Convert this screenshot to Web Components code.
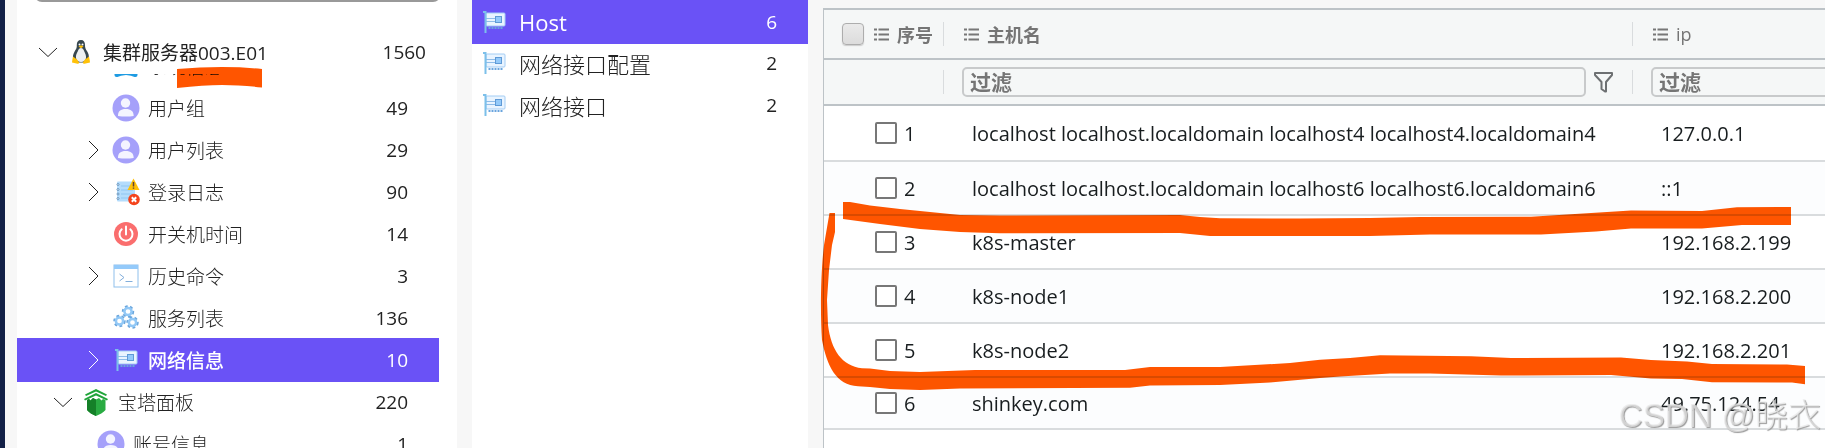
<!DOCTYPE html>
<html lang="zh-CN">
<head>
<meta charset="UTF-8">
<title>Host</title>
<style>
    html, body { margin: 0; height: 100%; }
    body { background: #f7f7f7; color: #222; font-family: "Open Sans", "Noto Sans CJK SC", sans-serif; font-size: 19px; overflow: hidden; }
</style>
</head>
<body>
<app-shell>
    <tree-panel slot="tree">
        <tree-row slot="root" level="0" icon="linux" arrow="down" count="1560" root>集群服务器003.E01</tree-row>
        <tree-row level="3" icon="windows" count="">系统信息</tree-row>
        <tree-row level="3" icon="user" count="49">用户组</tree-row>
        <tree-row level="3" icon="user" arrow="right" count="29">用户列表</tree-row>
        <tree-row level="3" icon="log" arrow="right" count="90">登录日志</tree-row>
        <tree-row level="3" icon="power" count="14">开关机时间</tree-row>
        <tree-row level="3" icon="terminal" arrow="right" count="3">历史命令</tree-row>
        <tree-row level="3" icon="gears" count="136">服务列表</tree-row>
        <tree-row level="3" icon="nic" arrow="right" count="10" selected>网络信息</tree-row>
        <tree-row level="1" icon="pagoda" arrow="down" count="220">宝塔面板</tree-row>
        <tree-row level="2" icon="user" count="1">账号信息</tree-row>
    </tree-panel>
    <category-list slot="list">
        <category-item count="6" selected>Host</category-item>
        <category-item count="2">网络接口配置</category-item>
        <category-item count="2">网络接口</category-item>
    </category-list>
    <host-table slot="content"></host-table>
    <ink-marks slot="overlay"></ink-marks>
    <water-mark slot="overlay">CSDN @晓衣</water-mark>
</app-shell>

<script>
const ICONS = {
    linux: `
        <path d="M14 2c-3 0-4.300 2-4.200 5 .1 3-.6 4-2.200 6.500-1.500 2.500-2 5-1.400 7.500l3 3.500h9.500l3-3.500c.6-3-.2-5.500-1.600-7.700C18.500 11 18 9.500 18 7c0-3-1.200-5-4-5z" fill="#37474f"/>
        <path d="M14 10c-1.500 0-2.300 1.200-3.200 3.200-1.200 2.300-2.200 4.300-1.800 6.800.4 2.600 2.500 4 5 4s4.700-1.400 5-4c.3-2.600-.7-4.500-1.800-6.800-.9-2-1.700-3.200-3.200-3.200z" fill="#eceff1"/>
        <circle cx="12.500" cy="6.500" r="1" fill="#fff"/><circle cx="15.500" cy="6.500" r="1" fill="#fff"/>
        <path d="M11.500 8.500l2.500-1.300 2.500 1.300-2.500 1.700z" fill="#ffc107"/>
        <path d="M6 18.500l4 3 2 2.800c.3 1-.5 1.600-1.500 1.500L5 24.500l.3-2.500zM22 18.500l-4 3-2 2.800c-.3 1 .5 1.600 1.500 1.500l5.500-1.300-.3-2.500z" fill="#ffc107"/>`,
    windows: `<rect x="2.500" y="3" width="23" height="22" rx="2" fill="#1e9be2"/><path d="M4 25.500q10-5 20 0z" fill="#fff"/>`,
    user: `
        <circle cx="14" cy="14" r="13.500" fill="#a5a0fa"/>
        <circle cx="13.500" cy="9" r="4.700" fill="#f4f4ff"/>
        <path d="M6 22c0-5 2.600-7 7.700-7s8 2 8 7q-7.800 1-15.700 0z" fill="#f4f4ff"/>`,
    log: `
        <rect x="5" y="3.500" width="18" height="20" rx="1" fill="#b4dcfc"/>
        <path d="M9 8h12M9 12h12M9 16h12M9 20h12" stroke="#90c6f2"/>
        <g fill="#fff" stroke="#6292bd"><circle cx="6" cy="6.500" r="1"/><circle cx="6" cy="11.500" r="1"/><circle cx="6" cy="16" r="1"/><circle cx="6" cy="20.500" r="1"/></g>
        <path d="M21.500.5l6 11.500h-12z" fill="#ffc107"/><path d="M21.500 4v4.500M21.500 9.500v1.300" stroke="#5d4037" stroke-width="1.500"/>
        <circle cx="22" cy="21.500" r="5.800" fill="#f4431c"/><path d="M19.800 19.300l4.400 4.400M24.200 19.300l-4.400 4.400" stroke="#fff" stroke-width="2"/>`,
    power: `
        <circle cx="14" cy="14" r="12" fill="#fa6e6e"/>
        <path d="M9.700 9.300a6.500 6.500 0 1 0 8.600 0M14 6.500v8" fill="none" stroke="#fff" stroke-width="2" stroke-linecap="round"/>`,
    terminal: `
        <rect x="2" y="3" width="24" height="22" fill="#fff" stroke="#8fc0ec"/>
        <path d="M2 3h24v4H2z" fill="#94cafa"/>
        <path d="M7.500 12l4.500 3.500-4.500 3.500M13.500 19.500h7" fill="none" stroke="#82aedb"/>`,
    gears: `
        <g fill="none" stroke="#6ba6dc">
            <g stroke-width="3" stroke-dasharray="2.500 2.200"><circle cx="16" cy="7.500" r="4.700"/><circle cx="7.500" cy="17" r="4.700"/><circle cx="20.500" cy="18.500" r="4.700"/></g>
            <g stroke="#92c8f6" stroke-width="2.500"><circle cx="16" cy="7.500" r="3.600"/><circle cx="7.500" cy="17" r="3.600"/><circle cx="20.500" cy="18.500" r="3.600"/></g>
        </g>`,
    nic: `
        <rect x="6" y="5" width="19" height="13" rx="1" fill="#e9f4ff" stroke="#a4cdf4"/>
        <path d="M6 10.500h9M6 13.500h9" stroke="#8ebce9"/>
        <rect x="15.500" y="8.500" width="6" height="6" fill="#94cafa" stroke="#5f9ad6"/>
        <path d="M8.500 20h15" stroke="#6aa5de" stroke-width="2" stroke-dasharray="2 1"/>
        <path d="M3 4h2.500v21" fill="none" stroke="#7cc0ea" stroke-width="2"/>`,
    pagoda: `
        <path d="M14 1l11 5.500-1 1.500-10-4.500L4 8 3 6.500zM14 5l12 6-1 1.500-11-5-11 5-1-1.500z" fill="#20a53a"/>
        <path d="M5 12l2-1 1.500 1.500L11 10l3 1.500 3-1.500 2.500 2.500L21 11l2.500 1v10c-2 2.500-6 4.500-9.500 6-3.500-1.500-7-3.500-9-6z" fill="#29ab42"/>
        <path d="M5 12l2-1 1.500 1.500L11 10l3 1.500V28c-3.500-1.500-7-3.500-9-6z" fill="#158028"/>`,
    down: `<path d="M1 6l9 8.500L19 6" fill="none" stroke="currentColor"/>`,
    right: `<path d="M6 1l9 9-9 9" fill="none" stroke="currentColor"/>`,
    list: `<path d="M4.500 2.500H15M4.500 7.500H15M4.500 12.500H15M0 2.500h3M0 7.500h3M0 12.500h3" fill="none" stroke="#777" stroke-width="2"/>`,
    funnel: `<path d="M1 1h17v2l-6 7v9.500h-1L7.500 17v-7L1 3z" fill="none" stroke="#6d7072" stroke-width="2" stroke-linejoin="round"/>`
};

const icon = (name, w = 28, h = w) =>
    ICONS[name] ? `<svg width="${w}" height="${h}" viewBox="0 0 ${w} ${h}" aria-hidden="true">${ICONS[name]}</svg>` : '';

class AppShell extends HTMLElement {
    constructor() {
        super();
        this.attachShadow({ mode: 'open' }).innerHTML = `
        <style>
            :host { display: grid; grid-template-columns: 440px 336px minmax(0, 1fr); gap: 15px; position: relative; height: 100vh; padding-left: 12px; border-left: 5px solid #122046; box-sizing: border-box; overflow: hidden; }
        </style>
        <slot name="tree"></slot>
        <slot name="list"></slot>
        <slot name="content"></slot>
        <slot name="overlay"></slot>`;
    }
}

class TreePanel extends HTMLElement {
    constructor() {
        super();
        this.attachShadow({ mode: 'open' }).innerHTML = `
        <style>
            :host { display: flex; flex-direction: column; min-height: 0; background: #fff; padding-right: 18px; overflow: hidden; }
            input { flex: none; height: 42px; margin: -40px -2px 27px 17px; border: 2px solid #999; border-radius: 8px; box-sizing: border-box; background: #fff; font: inherit; }
            nav { display: contents; }
            .rows { flex: 1; min-height: 0; overflow: hidden; }
            .scroll { margin-top: -29px; }
        </style>
        <input type="search" aria-label="搜索">
        <nav>
            <slot name="root"></slot>
            <div class="rows"><div class="scroll"><slot></slot></div></div>
        </nav>`;
    }
}

class TreeRow extends HTMLElement {
    connectedCallback() {
        this.attachShadow({ mode: 'open' }).innerHTML = `
        <style>
            :host { display: block; flex: none; }
            a { display: flex; align-items: center; gap: 8px; height: 42px; padding: 0 31px 0 calc(21px + var(--level) * 15px); color: inherit; text-decoration: none; font-weight: 300; white-space: nowrap; }
            .arrow { flex: none; display: flex; width: 21px; }
            .icon { flex: none; display: flex; width: 28px; }
            .label { flex: 1; }
            .count { font-weight: 400; }
            :host([root]) a { height: 45px; padding-right: 13px; font-weight: 400; }
            :host([selected]) { margin: -1px 0; }
            :host([selected]) a { height: 44px; background: #6a52f6; color: #fff; font-weight: 500; }
        </style>
        <a href="#" style="--level: ${this.getAttribute('level')}">
            <span class="arrow">${icon(this.getAttribute('arrow'), 20)}</span>
            <span class="icon">${icon(this.getAttribute('icon'))}</span>
            <span class="label"><slot></slot></span>
            <span class="count">${this.getAttribute('count')}</span>
        </a>`;
    }
}

class CategoryList extends HTMLElement {
    constructor() {
        super();
        this.attachShadow({ mode: 'open' }).innerHTML = `
        <style>
            :host { display: block; background: #fff; }
        </style>
        <slot></slot>`;
    }
}

class CategoryItem extends HTMLElement {
    connectedCallback() {
        this.attachShadow({ mode: 'open' }).innerHTML = `
        <style>
            :host { display: block; }
            a { display: flex; align-items: center; gap: 11px; height: 42px; padding: 0 31px 0 8px; color: inherit; text-decoration: none; font-weight: 300; }
            .label { flex: 1; font-size: 22px; }
            .count { font-weight: 400; }
            svg { flex: none; }
            :host([selected]) { margin-bottom: -2px; }
            :host([selected]) a { height: 44px; background: #6a52f6; color: #fff; font-weight: 500; }
            :host([selected]) .count { font-weight: 500; }
        </style>
        <a href="#">
            ${icon('nic')}
            <span class="label"><slot></slot></span>
            <span class="count">${this.getAttribute('count')}</span>
        </a>`;
    }
}

const HOSTS = [
    ['localhost localhost.localdomain localhost4 localhost4.localdomain4', '127.0.0.1'],
    ['localhost localhost.localdomain localhost6 localhost6.localdomain6', '::1'],
    ['k8s-master', '192.168.2.199'],
    ['k8s-node1', '192.168.2.200'],
    ['k8s-node2', '192.168.2.201'],
    ['shinkey.com', '49.75.124.54']
];

class HostTable extends HTMLElement {
    connectedCallback() {
        this.attachShadow({ mode: 'open' });
        this.render();
    }

    render() {
        const rows = HOSTS.map(([name, ip], i) => `
            <tr>
                <td class="no"><label><input type="checkbox">${i + 1}</label></td>
                <td>${name}</td>
                <td>${ip}</td>
            </tr>`).join('');

        this.shadowRoot.innerHTML = `
        <style>
            :host { display: block; margin-top: 8px; border-top: 2px solid #bdc3c7; border-left: 1px solid #bdc3c7; background: #fff; overflow: hidden; }
            table { width: 100%; table-layout: fixed; border-collapse: separate; border-spacing: 0; color: #181d1f; }
            .c-no { width: 120px; }
            .c-ip { width: 192px; }
            th, td { box-sizing: border-box; padding: 0; text-align: left; white-space: nowrap; }
            th { height: 50px; background: #f5f7f7; border-bottom: 2px solid #bdc3c7; color: #757575; font-size: 18px; overflow: hidden; }
            .filters th { height: 46px; }
            .head { display: flex; align-items: center; gap: 8px; height: 24px; padding-left: 20px; }
            .sep { border-right: 1px solid #d9dcde; }
            .first { padding-left: 18px; }
            .first svg { margin-left: 2px; }
            .latin { font-weight: 400; }
            .filters .head { padding-left: 18px; padding-right: 18px; }
            .filters .open { padding-right: 0; margin-right: -20px; }
            input[type=text] { flex: 1; min-width: 0; height: 30px; padding: 0 6px; border: 2px solid #c8cacb; border-radius: 5px; box-sizing: border-box; background: transparent; color: #757575; font: 700 21px "Open Sans", "Noto Sans CJK SC", sans-serif; }
            input::placeholder { color: #757575; opacity: 1; }
            button { display: flex; padding: 0; border: 0; background: none; }
            input[type=checkbox] { appearance: none; flex: none; width: 22px; height: 22px; margin: 0; border: 2px solid #777; border-radius: 2px; box-sizing: border-box; background: #fff; }
            th input[type=checkbox] { border: 1px solid #adadad; border-radius: 4px; background: linear-gradient(#eaeaea, #dcdcdc); box-shadow: 0 1px 1px #ccc; }
            td { height: 54px; padding-left: 28px; border-bottom: 2px solid #d9dcde; font-size: 20px; }
            tr:first-child td { height: 56px; }
            tr:last-child td { height: 52px; }
            tbody tr:nth-child(even) { background: #fcfdfe; }
            .no { padding-left: 51px; }
            label { display: flex; align-items: center; gap: 7px; }
        </style>
        <table>
            <colgroup><col class="c-no"><col><col class="c-ip"></colgroup>
            <thead>
                <tr>
                    <th><div class="head sep first"><input type="checkbox" aria-label="全选">${icon('list', 15)}<span>序号</span></div></th>
                    <th><div class="head sep">${icon('list', 15)}<span>主机名</span></div></th>
                    <th><div class="head">${icon('list', 15)}<span class="latin">ip</span></div></th>
                </tr>
                <tr class="filters">
                    <th><div class="head sep"></div></th>
                    <th><div class="head sep"><input type="text" placeholder="过滤" aria-label="主机名"><button aria-label="筛选">${icon('funnel', 20, 21)}</button></div></th>
                    <th><div class="head open"><input type="text" placeholder="过滤" aria-label="ip"></div></th>
                </tr>
            </thead>
            <tbody>${rows}</tbody>
        </table>`;
    }
}

// freehand marker strokes laid over the page
class InkMarks extends HTMLElement {
    constructor() {
        super();
        this.attachShadow({ mode: 'open' }).innerHTML = `
        <style>
            :host { position: absolute; top: 0; left: -5px; pointer-events: none; mix-blend-mode: multiply; }
            svg { display: block; }
        </style>
        <svg width="1825" height="448" viewBox="0 0 1825 448" fill="#ff5500" aria-hidden="true">
            <path d="M177 69Q200 67 222 67T262 69V87.500Q240 85 222 85T177 88z"/>
            <path d="M843 202L850 202 870 205.500 900 209 930 212 960 215 1000 215.500 1180 215 1200 217 1220 218.300 1300 218.500 1370 218 1420 217 1531 216.700 1571 214.300 1631 210.500 1702 211 1737 207.200 1791 207V225L1742 225 1702 228.500 1631 228.500 1596 231.500 1541 234.500 1430 234.500 1370 236 1210 236 1180 233 1000 233.300 960 232 920 229 880 224 843 219z"/>
            <path d="M829.500 213H835V232L832 245 829 270 827 300 828 325C831 350 842 366 862 368.300L870 368.500 890 371 920 372 975 370 1125 370 1150 367 1220 367 1290 363 1320 359.700 1350 358 1380 355.300 1471 356.300 1511 358 1621 357.500 1651 360 1687 361.500 1712 364 1787 364.500 1805 366V384.300L1792 382.500 1712 382.300 1682 379 1651 378.500 1611 375 1501 375.500 1430 373.500 1390 373.500 1340 376.500 1320 378 1270 382.500 1220 385 1150 385.500 1130 387.800 960 388.500 920 390 890 389 870 387 858 386.300C836 385 827 366 822 340 820 310 821 270 824 245z"/>
        </svg>`;
    }
}

class WaterMark extends HTMLElement {
    constructor() {
        super();
        this.attachShadow({ mode: 'open' }).innerHTML = `
        <style>
            :host { position: absolute; right: 4px; bottom: 8px; color: rgba(232, 232, 232, 0.7); font: 33px/48px "Liberation Sans", "Noto Sans CJK SC", sans-serif; font-weight: 300; text-shadow: 1px 1px 1px #999; pointer-events: none; white-space: nowrap; }
        </style>
        <slot></slot>`;
    }
}

customElements.define('app-shell', AppShell);
customElements.define('tree-panel', TreePanel);
customElements.define('tree-row', TreeRow);
customElements.define('category-list', CategoryList);
customElements.define('category-item', CategoryItem);
customElements.define('host-table', HostTable);
customElements.define('ink-marks', InkMarks);
customElements.define('water-mark', WaterMark);
</script>
</body>
</html>
